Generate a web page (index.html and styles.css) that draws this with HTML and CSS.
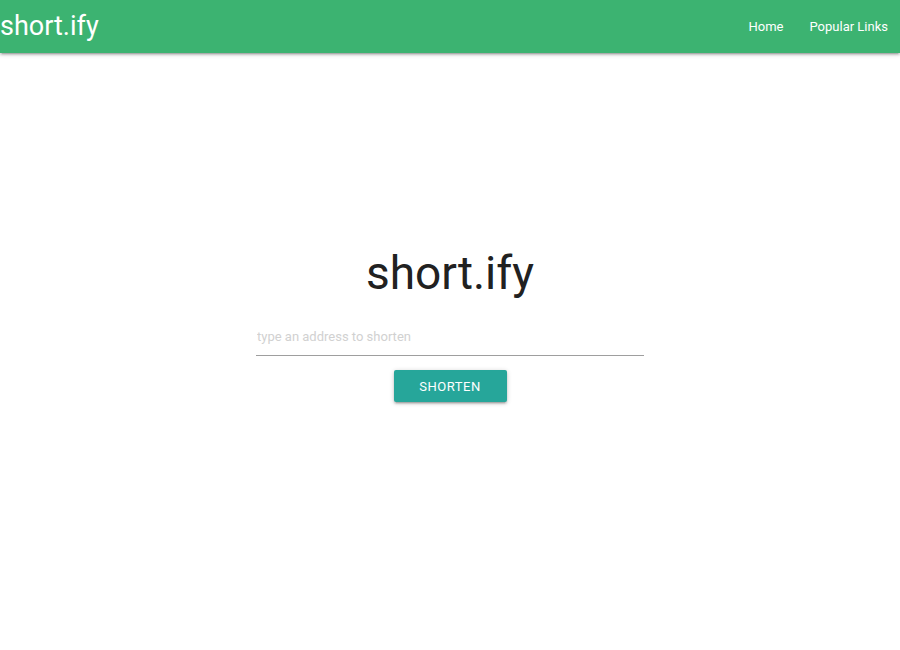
FILE: index.html
```html
<!DOCTYPE html>
<html>
<head>
<meta charset="utf-8">
<link rel="stylesheet" href="styles.css">
</head>
<body>
<nav class="nav">
  <a class="brand" href="#">short.ify</a>
  <ul class="links">
    <li><a href="#">Home</a></li>
    <li><a href="#">Popular Links</a></li>
  </ul>
</nav>
<main class="main">
  <h2 class="title">short.ify</h2>
  <form class="form">
    <input class="field" type="text" placeholder="type an address to shorten">
    <button class="btn" type="button">SHORTEN</button>
  </form>
</main>
</body>
</html>
```
FILE: styles.css
```css
* { box-sizing: border-box; }
html, body { margin: 0; padding: 0; }
body {
  font-family: Roboto, "Liberation Sans", sans-serif;
  color: #212121;
  background: #fff;
  width: 900px;
  height: 650px;
  overflow: hidden;
}
.nav {
  height: 53px;
  background: #3cb371;
  display: flex;
  align-items: center;
  justify-content: space-between;
  box-shadow: 0 2px 2px 0 rgba(0,0,0,0.14), 0 3px 1px -2px rgba(0,0,0,0.12), 0 1px 5px 0 rgba(0,0,0,0.2);
  position: relative;
}
.brand {
  color: #fff;
  text-decoration: none;
  font-size: 27px;
  line-height: 53px;
}
.links {
  list-style: none;
  margin: 0;
  padding: 0 12px 0 0;
  display: flex;
}
.links a {
  display: block;
  color: #fff;
  text-decoration: none;
  font-size: 13px;
  padding: 0 13px;
  line-height: 53px;
}
.links li:last-child a { padding-right: 0; }
.main {
  display: flex;
  flex-direction: column;
  align-items: center;
  padding-top: 192px;
}
.title {
  margin: 0;
  font-weight: 400;
  font-size: 46px;
  line-height: 56px;
}
.form {
  margin-top: 17px;
  width: 388px;
  display: flex;
  flex-direction: column;
  align-items: center;
}
.field {
  width: 100%;
  height: 38px;
  border: none;
  border-bottom: 1px solid #9e9e9e;
  outline: none;
  font-family: inherit;
  font-size: 13px;
  padding: 0 0 0 1px;
  background: transparent;
}
.field::placeholder { color: #d1d1d1; }
.btn {
  margin-top: 14px;
  width: 113px;
  height: 32px;
  border: none;
  border-radius: 2px;
  background: #26a69a;
  color: #fff;
  font-family: inherit;
  font-size: 13px;
  letter-spacing: 0.5px;
  box-shadow: 0 2px 2px 0 rgba(0,0,0,0.14), 0 3px 1px -2px rgba(0,0,0,0.12), 0 1px 5px 0 rgba(0,0,0,0.2);
}
```
